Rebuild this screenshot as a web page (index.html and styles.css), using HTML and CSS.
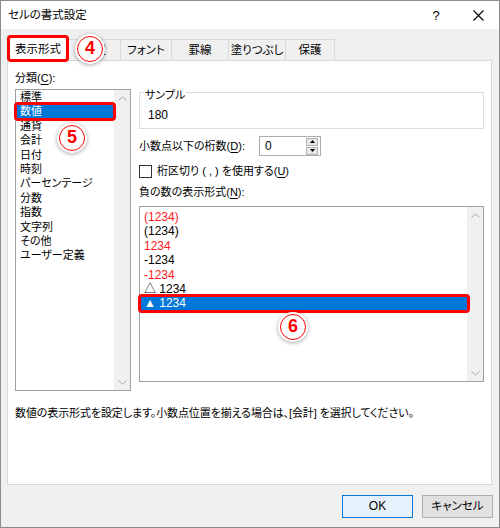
FILE: index.html
```html
<!DOCTYPE html>
<html lang="ja">
<head>
<meta charset="utf-8">
<title>セルの書式設定</title>
<link rel="stylesheet" href="styles.css">
</head>
<body>
<div class="window">
  <div class="titlebar">
    <span class="title">セルの書式設定</span>
    <span class="help">?</span>
    <span class="close"><svg width="11" height="11" viewBox="0 0 11 11"><path d="M0.5 0.5L10.5 10.5M10.5 0.5L0.5 10.5" stroke="#000" stroke-width="1.1" fill="none"/></svg></span>
  </div>

  <div class="tabs">
    <div class="tab active">表示形式</div>
    <div class="tab t-haichi">配置</div>
    <div class="tab t-font">フォント</div>
    <div class="tab t-keisen">罫線</div>
    <div class="tab t-nuri">塗りつぶし</div>
    <div class="tab t-hogo">保護</div>
  </div>

  <div class="panel">
    <div class="cols">
      <div class="col-left">
        <div class="label cat-label">分類(<u>C</u>):</div>
        <div class="listbox cat">
          <div class="items">
            <div class="item">標準</div>
            <div class="item sel">数値</div>
            <div class="item">通貨</div>
            <div class="item">会計</div>
            <div class="item">日付</div>
            <div class="item">時刻</div>
            <div class="item">パーセンテージ</div>
            <div class="item">分数</div>
            <div class="item">指数</div>
            <div class="item">文字列</div>
            <div class="item">その他</div>
            <div class="item">ユーザー定義</div>
          </div>
          <div class="scroll">
            <svg width="9" height="5" viewBox="0 0 9 5"><path d="M0.5 4.5L4.5 0.8L8.5 4.5" stroke="#a8a8a8" fill="none"/></svg>
            <svg width="9" height="5" viewBox="0 0 9 5"><path d="M0.5 0.5L4.5 4.2L8.5 0.5" stroke="#a8a8a8" fill="none"/></svg>
          </div>
        </div>
      </div>

      <div class="col-right">
        <div class="group">
          <div class="group-label">サンプル</div>
          <div class="sample num">180</div>
        </div>

        <div class="decimal-row">
          <span class="decimal-label">小数点以下の桁数(<u>D</u>):</span>
          <div class="spin">
            <span class="spin-val num">0</span>
            <div class="spin-btns">
              <span class="sb"><svg width="5" height="3" viewBox="0 0 5 3"><path d="M0 3L2.5 0L5 3Z" fill="#000"/></svg></span>
              <span class="sb"><svg width="5" height="3" viewBox="0 0 5 3"><path d="M0 0L2.5 3L5 0Z" fill="#000"/></svg></span>
            </div>
          </div>
        </div>

        <div class="check-row">
          <span class="checkbox"></span>
          <span>桁区切り ( , ) を使用する(<u>U</u>)</span>
        </div>

        <div class="label neg-label">負の数の表示形式(<u>N</u>):</div>

        <div class="listbox neg">
          <div class="items">
            <div class="item num red">(1234)</div>
            <div class="item num">(1234)</div>
            <div class="item num red">1234</div>
            <div class="item num">-1234</div>
            <div class="item num red">-1234</div>
            <div class="item num">△ 1234</div>
            <div class="item num sel">▲ 1234</div>
          </div>
          <div class="scroll">
            <svg width="9" height="5" viewBox="0 0 9 5"><path d="M0.5 4.5L4.5 0.8L8.5 4.5" stroke="#a8a8a8" fill="none"/></svg>
            <svg width="9" height="5" viewBox="0 0 9 5"><path d="M0.5 0.5L4.5 4.2L8.5 0.5" stroke="#a8a8a8" fill="none"/></svg>
          </div>
        </div>
      </div>
    </div>

    <p class="desc">数値の表示形式を設定します。小数点位置を揃える場合は、[会計] を選択してください。</p>
  </div>

  <div class="footer">
    <button class="btn ok num">OK</button>
    <button class="btn cancel">キャンセル</button>
  </div>

  <div class="callout c4"><span>4</span></div>
  <div class="callout c5"><span>5</span></div>
  <div class="callout c6"><span>6</span></div>
</div>
</body>
</html>
```

FILE: styles.css
```css
* { box-sizing: border-box; }

html, body {
  margin: 0;
  padding: 0;
  background: #fff;
}

body {
  font-family: "Liberation Sans", "Noto Sans CJK JP", sans-serif;
  font-size: 11px;
  font-feature-settings: "palt";
  color: #000;
}

.num { font-size: 12px; }

u { text-decoration-thickness: 1px; text-underline-offset: 2px; }

.window {
  position: relative;
  width: 500px;
  height: 528px;
  border: 1px solid #8c8c8c;
  background: #f0f0f0;
  display: flex;
  flex-direction: column;
}

/* title bar */
.titlebar {
  height: 28px;
  background: #fff;
  display: flex;
  align-items: center;
  padding-left: 7px;
  flex: none;
}
.title { flex: 1; line-height: 15px; font-size: 11.5px; }
.help {
  width: 12px;
  text-align: center;
  font-size: 13px;
  margin-right: 31px;
}
.close {
  display: flex;
  margin-right: 15px;
}

/* tabs */
.tabs {
  height: 31px;
  flex: none;
  display: flex;
  align-items: flex-end;
  padding-left: 6px;
  position: relative;
  z-index: 2;
}
.tab {
  height: 21px;
  border: 1px solid #d9d9d9;
  border-bottom: none;
  border-left: none;
  background: #f0f0f0;
  display: flex;
  align-items: center;
  justify-content: center;
  line-height: 15px;
  padding-top: 1px;
  font-size: 11.5px;
}
.tab.active {
  position: relative;
  width: 62px;
  height: 26px;
  margin-bottom: -1px;
  background: #fff;
  border-left: 1px solid #d9d9d9;
}
.tab.active::after {
  content: "";
  position: absolute;
  left: -1px; top: -1px; right: -1px; bottom: -1px;
  border: 3px solid #f00;
  border-radius: 4px;
}
.t-haichi { width: 52px; }
.t-font { width: 51px; }
.t-keisen { width: 57px; }
.t-nuri { width: 57px; }
.t-hogo { width: 49px; }

/* panel */
.panel {
  margin-left: 6px;
  width: 485px;
  height: 425px;
  flex: none;
  background: #fff;
  border: 1px solid #d9d9d9;
  padding: 10px 6px 0 7px;
  position: relative;
  z-index: 1;
}

.cols {
  display: grid;
  grid-template-columns: 116px 345px;
  column-gap: 8px;
}

.label { line-height: 15px; }
.cat-label { margin-bottom: 3px; }

.listbox {
  border: 1px solid #a0a0a0;
  background: #fff;
  display: flex;
}
.listbox .items { flex: 1; }
.item {
  height: 14.4px;
  line-height: 14.4px;
  padding-left: 3px;
  white-space: nowrap;
}
.item.sel {
  background: #0078d7;
  color: #fff;
  position: relative;
}
.item.sel::after {
  content: "";
  position: absolute;
  left: -3px; top: -2px; right: -3px; bottom: -2px;
  border: 3px solid #f00;
  border-radius: 4px;
}
.item.red { color: #ff1a1a; }

.scroll {
  width: 16px;
  flex: none;
  background: #f0f0f0;
  display: flex;
  flex-direction: column;
  justify-content: space-between;
  align-items: center;
  padding: 6px 0 5px;
}

.cat { height: 302px; }
.cat .items { padding: 0 1px 0 1px; }

/* right column */
.group {
  margin-top: 21px;
  height: 37px;
  border: 1px solid #dcdcdc;
}
.group-label {
  width: fit-content;
  margin: -5px 0 0 4px;
  padding: 0 1px;
  background: #fff;
  line-height: 15px;
}
.sample {
  margin: 5px 0 0 8px;
  line-height: 15px;
}

.decimal-row {
  margin-top: 7px;
  display: flex;
  align-items: center;
  height: 20px;
}
.decimal-label { width: 120px; line-height: 15px; padding-top: 1px; }
.spin {
  width: 62px;
  height: 20px;
  border: 1px solid #abadb3;
  display: flex;
  align-items: center;
  justify-content: space-between;
  padding: 0 2px 0 5px;
}
.spin-val { line-height: 15px; }
.spin-btns {
  display: flex;
  flex-direction: column;
  gap: 1px;
}
.sb {
  width: 12px;
  height: 8px;
  background: #e6e6e6;
  border: 1px solid #b5b5b5;
  display: flex;
  align-items: center;
  justify-content: center;
}

.check-row {
  margin-top: 8px;
  display: flex;
  align-items: center;
  gap: 5px;
  height: 15px;
  line-height: 15px;
}
.checkbox {
  width: 13px;
  height: 13px;
  border: 1px solid #333;
  background: #fff;
}

.neg-label { margin-top: 6px; margin-bottom: 6px; }

.neg { height: 176px; }
.neg .items { padding: 3px 0 0 1px; }
.neg .item { padding-left: 3px; }

.desc {
  margin: 15px 0 0;
  line-height: 15px;
  letter-spacing: -0.1px;
}

/* footer */
.footer {
  flex: 1;
  display: flex;
  justify-content: flex-end;
  align-items: flex-start;
  gap: 9px;
  padding: 10px 6px 0 0;
}
.btn {
  width: 71px;
  height: 23px;
  font-family: inherit;
  font-size: 11.5px;
  font-feature-settings: "palt";
  color: #000;
  padding: 0;
  line-height: 15px;
}
.btn.ok { background: #e5f1fb; border: 1px solid #0078d7; font-size: 12px; }
.btn.cancel { background: #e1e1e1; border: 1px solid #adadad; }

/* callouts */
.callout {
  position: absolute;
  width: 30px;
  height: 30px;
  border-radius: 50%;
  background: #fff;
  box-shadow: 0 1px 4px rgba(0,0,0,0.35);
  display: flex;
  align-items: center;
  justify-content: center;
  z-index: 5;
}
.callout span {
  width: 26px;
  height: 26px;
  border-radius: 50%;
  border: 1.5px solid #f00;
  color: #f00;
  font-family: "Liberation Sans", "DejaVu Sans", sans-serif;
  font-weight: bold;
  font-size: 18px;
  line-height: 23px;
  text-align: center;
}
.c4 { left: 74px; top: 33px; }
.c5 { left: 56px; top: 122px; }
.c6 { left: 277px; top: 311px; }
```
